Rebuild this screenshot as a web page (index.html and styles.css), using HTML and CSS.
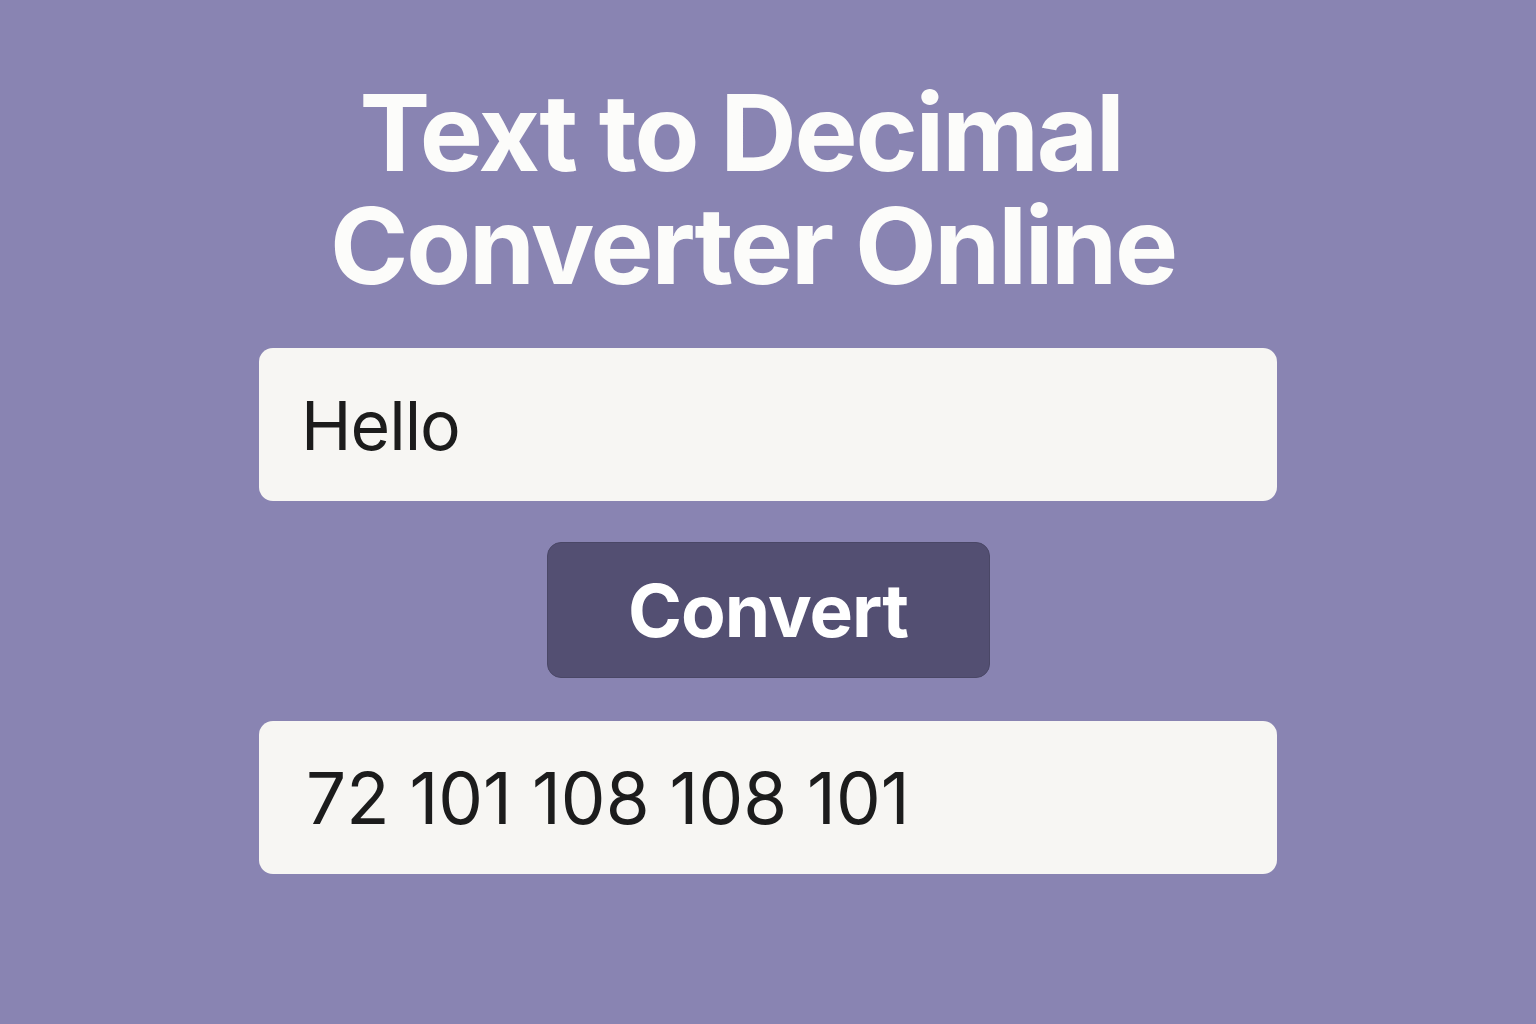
FILE: index.html
```html
<!DOCTYPE html>
<html lang="en">
<head>
    <meta charset="UTF-8">
    <meta name="viewport" content="width=device-width, initial-scale=1.0">
    <title>Text to Decimal Converter Online</title>
    <link rel="stylesheet" href="styles.css">
</head>
<body>

    <main class="converter">
        <h1 class="title">
            <span class="title-line first">Text to Decimal</span>
            <span class="title-line">Converter Online</span>
        </h1>

        <!-- Text to convert -->
        <input type="text" id="textInput" class="field" value="Hello" spellcheck="false">

        <button id="convertBtn" class="convert-btn">Convert</button>

        <!-- Decimal codes of each character -->
        <div id="result" class="field result">72 101 108 108 101</div>
    </main>

    <script>
        const textInput = document.getElementById("textInput");
        const convertBtn = document.getElementById("convertBtn");
        const result = document.getElementById("result");

        function convertText() {
            const codes = [];
            for (const ch of textInput.value) {
                codes.push(ch.codePointAt(0));
            }
            result.textContent = codes.join(" ");
        }

        convertBtn.addEventListener("click", convertText);
        textInput.addEventListener("keydown", (e) => {
            if (e.key === "Enter") convertText();
        });
    </script>

</body>
</html>
```

FILE: styles.css
```css
body {
    font-family: Inter, "Liberation Sans", sans-serif;
    background-color: #8984b2;
    margin: 0;
    min-height: 100vh;
}

.converter {
    width: 1018px;
    margin: 0 auto;
    padding-top: 76px;
    display: flex;
    flex-direction: column;
    align-items: center;
}

.title {
    margin: 0 0 46px;
    padding-right: 30px;
    font-size: 106px;
    font-weight: 700;
    line-height: 113px;
    letter-spacing: -2.2px;
    color: #fcfcfa;
    text-align: center;
}

.title-line {
    display: block;
}

.title-line.first {
    margin-right: 24px;
}

.field {
    box-sizing: border-box;
    width: 100%;
    height: 153px;
    border: none;
    border-radius: 14px;
    background-color: #f7f6f3;
    color: #1c1c1c;
    font-family: Inter, "Liberation Sans", sans-serif;
    font-size: 68px;
    letter-spacing: -1px;
    padding: 0 42px;
    outline: none;
}

.result {
    display: flex;
    align-items: center;
    padding-left: 47px;
    margin-top: 43px;
    font-size: 71px;
    letter-spacing: 0;
}

.convert-btn {
    box-sizing: border-box;
    width: 443px;
    height: 136px;
    margin-top: 41px;
    border: 1px solid #4a4766;
    border-radius: 14px;
    background-color: #534f72;
    color: #ffffff;
    font-family: Inter, "Liberation Sans", sans-serif;
    font-size: 73px;
    font-weight: 700;
    letter-spacing: -1px;
    cursor: pointer;
}

.convert-btn:hover {
    background-color: #4a4768;
}
```
